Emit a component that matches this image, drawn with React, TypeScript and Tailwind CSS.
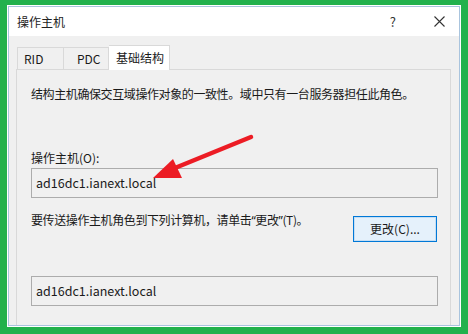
export default function App() {
  const font = { fontFamily: '"Noto Sans CJK SC", "Noto Sans", sans-serif' }
  return (
    <div
      className="relative flex h-[334px] w-[468px] flex-col bg-[#22b14c] pb-[7px] pl-[7px] pr-[7px] pt-[5px] text-[12px] text-[#1a1a1a]"
      style={font}
    >
      <div className="flex flex-1 flex-col bg-white p-px">
        <div className="flex flex-1 flex-col border border-[#a9c4de]">
          {/* title bar */}
          <div className="flex h-[29px] items-center bg-white pl-[8px] pr-[14px]">
            <span className="flex-1 text-[12px] leading-none text-[#222]">操作主机</span>
            <span className="mr-[38px] text-[13px] leading-none text-[#333]">?</span>
            <svg width="11" height="11" viewBox="0 0 11 11" className="text-[#333]">
              <path d="M0.5 0.5 L10.5 10.5 M10.5 0.5 L0.5 10.5" stroke="currentColor" strokeWidth="1.1" />
            </svg>
          </div>
          {/* body */}
          <div className="flex flex-1 flex-col overflow-hidden bg-[#f0f0f0] pr-[8px] pl-[7px] pt-[9px]">
            <div className="flex items-end pl-[1px]">
              <div className="flex h-[22px] w-[47px] items-center border border-b-0 border-[#d9d9d9] pl-[6px] text-[12px]">RID</div>
              <div className="flex h-[22px] w-[45px] items-center border border-b-0 border-l-0 border-[#d9d9d9] pl-[13px] text-[12px]">PDC</div>
              <div className="relative z-10 -mb-px flex h-[25px] w-[61px] items-center border border-b-0 border-l-0 border-[#d9d9d9] bg-white pl-[7px] text-[12px]">基础结构</div>
            </div>
            <div className="flex flex-1 flex-col border border-b-0 border-[#d9d9d9] pl-[14px] pr-[12px]">
              <div className="mt-[15px] h-[18px] leading-[18px] tracking-[-0.4px]">
                结构主机确保交互域操作对象的一致性。域中只有一台服务器担任此角色。
              </div>
              <div className="mt-[46px] h-[18px] leading-[18px]">操作主机(O):</div>
              <div className="mt-px flex h-[30px] items-center border border-[#acacac] pl-[4px] text-[12.5px]">
                ad16dc1.ianext.local
              </div>
              <div className="mt-[13px] flex items-start">
                <div className="flex-1 h-[18px] leading-[18px] tracking-[-0.4px]">
                  要传送操作主机角色到下列计算机，请单击<span style={{ fontFamily: '"Noto Sans", sans-serif' }}>“</span>更改<span style={{ fontFamily: '"Noto Sans", sans-serif' }}>”</span>(T)。
                </div>
                <div className="mt-[5px] mr-px flex h-[26px] w-[84px] items-center justify-center border border-[#0078d7] bg-[#e5f1fb] shadow-[inset_0_0_0_1px_#c6def3] text-[12px]">
                  更改(C)...
                </div>
              </div>
              <div className="mt-[34px] flex h-[30px] items-center border border-[#acacac] pl-[4px] text-[12.5px]">
                ad16dc1.ianext.local
              </div>
            </div>
          </div>
        </div>
      </div>
      {/* red annotation arrow */}
      <svg className="pointer-events-none absolute left-0 top-0" width="468" height="334" viewBox="0 0 468 334">
        <line x1="251" y1="137" x2="170" y2="170" stroke="#ec1c24" strokeWidth="4.5" strokeLinecap="round" />
        <polygon points="153,178 173,159 182,178" fill="#ec1c24" />
      </svg>
    </div>
  )
}
